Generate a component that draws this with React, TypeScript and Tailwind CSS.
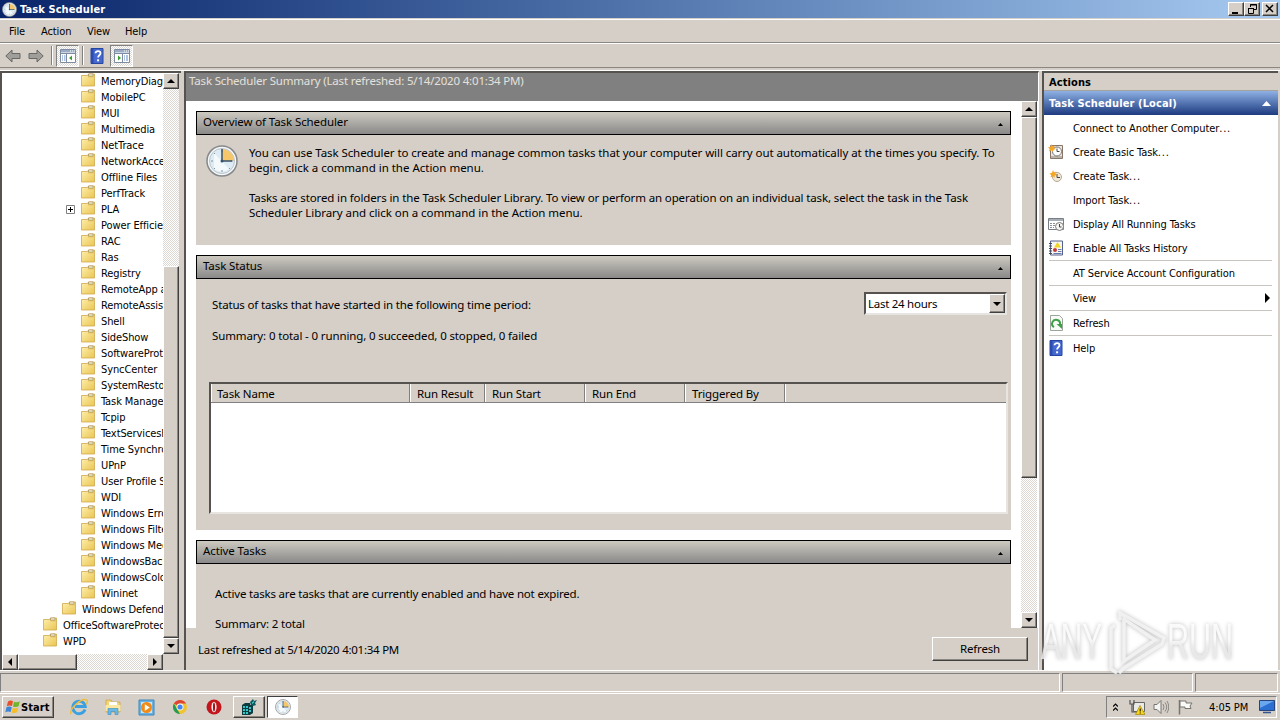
import type { ReactNode } from 'react'

interface TreeNode {
  label: string
  depth: 0 | 1 | 2
  expandable?: boolean
}

const tree: TreeNode[] = [
  ...[
    'MemoryDiagnostic', 'MobilePC', 'MUI', 'Multimedia', 'NetTrace', 'NetworkAccessProtection',
    'Offline Files', 'PerfTrack', 'PLA', 'Power Efficiency Diagnostics', 'RAC', 'Ras', 'Registry',
    'RemoteApp and Desktop', 'RemoteAssistance', 'Shell', 'SideShow', 'SoftwareProtectionPlatform',
    'SyncCenter', 'SystemRestore', 'Task Manager', 'Tcpip', 'TextServicesFramework',
    'Time Synchronization', 'UPnP', 'User Profile Service', 'WDI', 'Windows Error Reporting',
    'Windows Filtering Platform', 'Windows Media Sharing', 'WindowsBackup', 'WindowsColorSystem',
    'Wininet',
  ].map((label): TreeNode => ({ label, depth: 2, expandable: label === 'PLA' })),
  { label: 'Windows Defender', depth: 1 },
  { label: 'OfficeSoftwareProtectionPlatform', depth: 0 },
  { label: 'WPD', depth: 0 },
]

const indent = { 0: 'pl-10', 1: 'pl-[59px]', 2: 'pl-[78px]' }

const columns = [
  { label: 'Task Name', width: 'w-[199px] pl-[5px]' },
  { label: 'Run Result', width: 'w-[75px] pl-1.5' },
  { label: 'Run Start', width: 'w-[100px] pl-1.5' },
  { label: 'Run End', width: 'w-[100px] pl-1.5' },
  { label: 'Triggered By', width: 'w-[100px] pl-1.5' },
]

// classic Windows bevels
const raised = 'bg-[#d5cfc8] border border-t-white border-l-white border-r-[#404040] border-b-[#404040] shadow-[inset_-1px_-1px_0_#8b8680]'
const sunken = 'border border-t-[#808080] border-l-[#808080] border-r-white border-b-white'
const track = 'bg-[repeating-conic-gradient(#ffffff_0_25%,#dcd7d0_0_50%)] bg-[length:2px_2px]'

const ui = "font-['DejaVu_Sans_Condensed','DejaVu_Sans',sans-serif] text-[11px] tracking-[-0.1px]"
const uiBold = "font-['DejaVu_Sans_Condensed','DejaVu_Sans',sans-serif] font-bold text-[11px]"
const body = "font-['Noto_Sans','Open_Sans',sans-serif] text-[11.5px]"

function Arrow({ dir }: { dir: 'up' | 'down' | 'left' | 'right' }) {
  const d = {
    up: 'M0 6 4 2 8 6Z',
    down: 'M0 2 4 6 8 2Z',
    left: 'M6 0 2 4 6 8Z',
    right: 'M2 0 6 4 2 8Z',
  }[dir]
  return <svg className="size-2" viewBox="0 0 8 8"><path d={d} /></svg>
}

function ScrollButton({ dir }: { dir: 'up' | 'down' | 'left' | 'right' }) {
  return (
    <button className={`flex size-4 shrink-0 items-center justify-center ${raised}`}>
      <Arrow dir={dir} />
    </button>
  )
}

function Folder() {
  return (
    <svg className="h-[14px] w-4 shrink-0" viewBox="0 0 16 14">
      <defs>
        <linearGradient id="folder" x1="0" y1="0" x2="1" y2="1">
          <stop offset="0" stopColor="#fff1b0" />
          <stop offset="1" stopColor="#e9c452" />
        </linearGradient>
      </defs>
      <path d="M1.500 2.500h6l1-1.500h6v12h-13z" fill="url(#folder)" stroke="#cfa94a" strokeWidth=".8" />
      <path d="M8 3.800h6" stroke="#d9b558" strokeWidth=".8" />
      <path d="M8.500 1h4.500v2h-4.500z" fill="#fffbe8" stroke="#a08d58" strokeWidth=".7" />
    </svg>
  )
}

function Clock({ className = 'size-4' }: { className?: string }) {
  return (
    <svg className={className} viewBox="0 0 32 32">
      <circle cx="16" cy="16" r="15" fill="#f7f8f8" stroke="#85898c" strokeWidth="1.500" />
      <circle cx="16" cy="16" r="12.500" fill="#dcebf4" stroke="#bac3c9" />
      <path d="M16 16V4a12 12 0 0 1 12 12Z" fill="#f5c76a" />
      <path d="M8 8l15 16a12 12 0 0 1-15 0Z" fill="#f4f9fb" />
      <path d="M16 5v2M16 25v2M5 16h2M25 16h2M8 8l1 1M23 23l1 1M8 24l1-1" stroke="#7c93a4" />
      <path d="M16 4v12h10" fill="none" stroke="#36536d" strokeWidth="1.500" />
      <circle cx="16" cy="16" r="1.500" fill="#36536d" />
    </svg>
  )
}

function HelpIcon() {
  return (
    <svg className="size-4" viewBox="0 0 16 16">
      <path d="M2 .5h12v15H2z" fill="#4468cf" stroke="#2746a0" />
      <path d="M2 1h2.500v14H2z" fill="#2b4cae" />
      <path d="M6.500 5.200C6.500 2.500 11.500 2.500 11.500 5.300c0 2-2.400 2-2.400 4.200" fill="none" stroke="#fff" strokeWidth="1.800" />
      <path d="M8.100 11.300h2v2h-2z" fill="#fff" />
    </svg>
  )
}

function PaneIcon({ flip }: { flip?: boolean }) {
  return (
    <svg className="h-[14px] w-4" viewBox="0 0 16 14">
      <path d="M.5.5h15v13H.5z" fill="#fff" stroke="#7d8ba3" />
      <path d="M1 1h14v2.500H1z" fill="#9cabc4" />
      <path d="M10 2h1M12 2h1M14 2h1" stroke="#fff" />
      <path d="M1 4.500h14" stroke="#7d8ba3" />
      {flip ? (
        <>
          <path d="M8.500 5v8" stroke="#7d8ba3" />
          <path d="M10 7h1M12 7h2M10 9h1M12 9h2M10 11h1M12 11h2" stroke="#5f86c4" />
          <path d="M4 6.500v5L7 9Z" fill="#3c9e35" />
        </>
      ) : (
        <>
          <path d="M6.500 5v8" stroke="#7d8ba3" />
          <path d="M2 7h1M4 7h1.500M2 9h1M4 9h1.500M2 11h1M4 11h1.500" stroke="#5f86c4" />
          <path d="M12 6.500v5L9 9Z" fill="#3c9e35" />
        </>
      )}
    </svg>
  )
}

function NavArrow({ back }: { back?: boolean }) {
  return (
    <svg className="h-[14px] w-4" viewBox="0 0 16 14">
      <path
        d="M.8 7 7 1v3.500h8v5H7V13Z"
        transform={back ? undefined : 'translate(16 0) scale(-1 1)'}
        fill="#a09e9b"
        stroke="#686765"
      />
    </svg>
  )
}

function Spark() {
  return <path d="M3.500 0 4.500 2.300 7 1.500 5.800 3.800 8 5.200 5.300 5.600 5 8 3.500 6.200 1 7.500 1.700 5 0 3.500 2.500 2.800Z" fill="#f5a623" />
}

function BasicTaskIcon() {
  return (
    <svg className="size-4" viewBox="0 0 16 16">
      <path d="M2.500 1.500h12v13h-12z" fill="#e9e6df" stroke="#8a7466" />
      <path d="M3 12h11v2H3z" fill="#b9b3aa" />
      <circle cx="9" cy="7.500" r="4.500" fill="#fff" stroke="#777" />
      <path d="M9 4.500v3h2.500" fill="none" stroke="#444" />
      <Spark />
    </svg>
  )
}

function CreateTaskIcon() {
  return (
    <svg className="size-4" viewBox="0 0 16 16">
      <g transform="translate(1.500 2)">
        <circle cx="7.500" cy="7" r="4.500" fill="#efe8da" stroke="#b9a98c" />
        <path d="M7.500 4v3.500H10.500" fill="none" stroke="#454545" />
        <Spark />
      </g>
    </svg>
  )
}

function RunningIcon() {
  return (
    <svg className="size-4" viewBox="0 0 16 16">
      <path d="M.5 2.500h15v11H.5z" fill="#fff" stroke="#777e86" />
      <path d="M1 3h14v2H1z" fill="#a7adb4" />
      <path d="M2 7.500h6M2 9.500h5M2 11.500h4" stroke="#8a8f94" strokeDasharray="2 1" />
      <circle cx="11.500" cy="10.500" r="4" fill="#f4f4f2" stroke="#7b7b7b" />
      <path d="M11.500 8v3h2" fill="none" stroke="#444" />
    </svg>
  )
}

function HistoryIcon() {
  return (
    <svg className="size-4" viewBox="0 0 16 16">
      <path d="M2.500 1h12v14h-12z" fill="#f8f7ef" stroke="#55618a" />
      <path d="M1 3.500h3M1 6h3M1 8.500h3M1 11h3M1 13.500h3" stroke="#4a4a55" />
      <path d="M9.500 2 13 7.500H6Z" fill="#f2d422" />
      <circle cx="7" cy="10" r="2" fill="#c33a3a" />
      <path d="M10 9.500h3.500M10 11.500h3.500M5.500 13.500h8" stroke="#6678ad" />
    </svg>
  )
}

function RefreshIcon() {
  return (
    <svg className="size-4" viewBox="0 0 16 16">
      <path d="M2.500.5h9l3 3v12h-12z" fill="#f7faf6" stroke="#9aa69a" />
      <path d="M6 12.200A4 4 0 1 1 12 9.500" fill="none" stroke="#3ea046" strokeWidth="2" />
      <path d="M8.500 9h5.500v5Z" fill="#3ea046" />
    </svg>
  )
}

function Section({ title, className, children }: { title: string; className: string; children: ReactNode }) {
  return (
    <section className={`flex w-[815px] shrink-0 flex-col bg-[#d5cfc8] ${className}`}>
      <h2 className="flex h-6 shrink-0 items-center justify-between border border-black bg-linear-to-b from-[#cccac0] to-[#8b8989] pr-[7px] pb-0.5 pl-1.5">
        <span className="tracking-[-0.1px]">{title}</span>
        <svg className="mt-1 h-[3px] w-[5px]" viewBox="0 0 5 3"><path d="M0 3 2.500 0 5 3Z" /></svg>
      </h2>
      {children}
    </section>
  )
}

function Action({ icon, label, submenu }: { icon?: ReactNode; label: string; submenu?: boolean }) {
  // a trailing ellipsis is set wider than the text before it
  const dots = label.endsWith('...')
  return (
    <button className="flex h-6 w-full shrink-0 items-center pl-1 text-left">
      <span className="w-[25px] shrink-0">{icon}</span>
      <span className="flex-1 pt-0.5 whitespace-nowrap">
        {dots ? label.slice(0, -3) : label}
        {dots && <span className="tracking-[0.8px]">...</span>}
      </span>
      {submenu && <svg className="mr-2 h-[10px] w-[5px]" viewBox="0 0 5 10"><path d="M0 0 5 5 0 10Z" /></svg>}
    </button>
  )
}

function TitleBar() {
  return (
    <header className={`flex h-[18px] shrink-0 items-center bg-linear-to-r from-[#0a246a] to-[#a6caf0] pr-0.5 pl-0.5 text-white ${uiBold}`}>
      <Clock className="size-[15px]" />
      <span className="ml-[3px] flex-1 pt-0.5 tracking-[0.1px]">Task Scheduler</span>
      <div className="flex">
        <button className={`h-[14px] w-4 ${raised}`}>
          <svg viewBox="0 0 14 12"><path d="M3 9h6v2H3z" /></svg>
        </button>
        <button className={`h-[14px] w-4 ${raised}`}>
          <svg viewBox="0 0 14 12">
            <path d="M5.500 4V1.500h6v5H9M5 2h7" fill="none" stroke="#000" />
            <path d="M3.500 5.500h5v5h-5zM3 5.500h6" fill="none" stroke="#000" />
          </svg>
        </button>
        <button className={`ml-0.5 h-[14px] w-4 ${raised}`}>
          <svg viewBox="0 0 14 12"><path d="M3 2l7 7M10 2L3 9" stroke="#000" strokeWidth="1.500" /></svg>
        </button>
      </div>
    </header>
  )
}

function Toolbar() {
  return (
    <div className="flex h-6 shrink-0 items-center border-t border-white pl-[5px]">
      <NavArrow back />
      <span className="ml-[7px] flex"><NavArrow /></span>
      <i className="ml-[7px] h-[19px] w-0.5 border-l border-[#808080] bg-white" />
      <span className={`ml-[3px] flex h-[22px] w-[23px] items-center justify-center ${track} ${sunken}`}><PaneIcon /></span>
      <i className="ml-[3px] h-[19px] w-0.5 border-l border-[#808080] bg-white" />
      <span className="ml-[5px]"><HelpIcon /></span>
      <span className={`ml-[5px] flex h-[22px] w-[23px] items-center justify-center ${track} ${sunken}`}><PaneIcon flip /></span>
    </div>
  )
}

function TreePane() {
  return (
    <aside className="flex w-[181px] flex-col border-t-2 border-l-2 border-[#55524f] bg-white">
      <div className="flex h-[581px]">
        <ul className="w-[161px] overflow-hidden">
          {tree.map(node => (
            <li key={node.label} className={`relative flex h-4 items-center whitespace-nowrap ${indent[node.depth]}`}>
              {node.expandable && (
                <svg className="absolute top-1 left-16 size-[9px]" viewBox="0 0 9 9">
                  <path d="M.5.5h8v8h-8z" fill="#fff" stroke="#808080" />
                  <path d="M2 4.500h5M4.500 2v5" stroke="#000" />
                </svg>
              )}
              <span className="-mt-0.5 flex"><Folder /></span>
              <span className="ml-[5px] pt-0.5">{node.label}</span>
            </li>
          ))}
        </ul>
        <div className={`flex w-4 flex-col ${track}`}>
          <ScrollButton dir="up" />
          <div className="flex-1" />
          <div className={`h-[372px] ${raised}`} />
          <ScrollButton dir="down" />
        </div>
        <div className="w-0.5 bg-[#d5cfc8]" />
      </div>
      <div className="flex flex-1 bg-[#d5cfc8]">
        <div className={`flex h-4 w-[161px] ${track}`}>
          <ScrollButton dir="left" />
          <div className={`w-[59px] ${raised}`} />
          <div className="flex-1" />
          <ScrollButton dir="right" />
        </div>
      </div>
    </aside>
  )
}

function SummaryPane() {
  return (
    <main className={`flex w-[855px] flex-col border-t-2 border-r border-l-2 border-[#55524f] border-r-white bg-[#d5cfc8] tracking-normal ${body}`}>
      <h1 className="h-7 shrink-0 bg-[#808080] pl-[3px] leading-4 text-[#e4e1dc]">
        <span className="tracking-[-0.18px]">Task Scheduler Summary (Last refreshed: 5/14/2020 4:01:34 PM)</span>
      </h1>
      <div className="flex h-[527px] shrink-0 bg-white">
        <div className="flex flex-1 flex-col gap-2.5 overflow-hidden pt-2.5 pl-2.5">
          <Section title="Overview of Task Scheduler" className="h-[134px]">
            <div className="flex pt-2.5 pl-2.5">
              <Clock className="size-8 shrink-0" />
              <div className="ml-[11px] leading-[15px] whitespace-nowrap">
                <p className="tracking-[-0.076px]">You can use Task Scheduler to create and manage common tasks that your computer will carry out automatically at the times you specify. To</p>
                <p className="tracking-[-0.01px]">begin, click a command in the Action menu.</p>
                <p className="mt-[15px] tracking-[-0.125px]">Tasks are stored in folders in the Task Scheduler Library. To view or perform an operation on an individual task, select the task in the Task</p>
                <p className="tracking-[-0.05px]">Scheduler Library and click on a command in the Action menu.</p>
              </div>
            </div>
          </Section>
          <Section title="Task Status" className="h-[275px]">
            <div className="flex items-center justify-between pt-[13px] pr-1 pl-4">
              <span className="pt-0.5 tracking-[-0.16px]">Status of tasks that have started in the following time period:</span>
              <div className="flex h-[23px] w-[143px] items-center justify-between border-2 border-t-[#55524f] border-r-[#e8e5e0] border-b-[#e8e5e0] border-l-[#55524f] bg-white pl-0.5">
                <span className="tracking-[-0.27px]">Last 24 hours</span>
                <button className={`flex h-[19px] w-4 items-center justify-center ${raised}`}><Arrow dir="down" /></button>
              </div>
            </div>
            <p className="mt-[13px] pl-4 leading-4 tracking-[-0.13px]">Summary: 0 total - 0 running, 0 succeeded, 0 stopped, 0 failed</p>
            <div className="mt-[38px] ml-[13px] h-[132px] w-[799px] border-2 border-t-[#55524f] border-r-[#e8e5e0] border-b-[#e8e5e0] border-l-[#55524f] bg-white">
              <div className="flex h-[19px] border-b border-[#808080] bg-[#d5cfc8]">
                {columns.map(col => (
                  <span key={col.label} className={`border-r border-l border-r-[#808080] border-l-white leading-[19px] tracking-[-0.15px] whitespace-nowrap ${col.width}`}>
                    {col.label}
                  </span>
                ))}
                <span className="w-px bg-white" />
              </div>
            </div>
          </Section>
          <Section title="Active Tasks" className="h-[134px]">
            <p className="mt-[22px] pl-[19px] leading-4 tracking-[-0.19px]">Active tasks are tasks that are currently enabled and have not expired.</p>
            <p className="mt-3.5 h-[12px] overflow-hidden pl-[19px] leading-4 tracking-[-0.15px]">Summary: 2 total</p>
          </Section>
        </div>
        <div className={`mr-px flex w-4 flex-col ${track}`}>
          <ScrollButton dir="up" />
          <div className={`h-[361px] ${raised}`} />
          <div className="flex-1" />
          <ScrollButton dir="down" />
        </div>
      </div>
      <footer className="flex flex-1 items-center justify-between pr-2.5 pl-3">
        <span className="pt-px tracking-[-0.26px]">Last refreshed at 5/14/2020 4:01:34 PM</span>
        <button className={`h-6 w-24 tracking-[-0.2px] ${raised}`}>Refresh</button>
      </footer>
    </main>
  )
}

// translucent logo lying over the lower right of the desktop
function Watermark() {
  return (
    <svg className="pointer-events-none absolute top-[602px] left-[1036px] h-[76px] w-[204px] drop-shadow-[0_0_2px_#b4b4b4]" viewBox="0 0 204 76">
      <defs>
        <linearGradient id="mark" x1="0" y1="0" x2="0" y2="1">
          <stop offset=".45" stopColor="#ffffff" />
          <stop offset=".6" stopColor="#ebebeb" />
        </linearGradient>
      </defs>
      <g className="font-['Liberation_Sans_Narrow','Liberation_Sans',sans-serif] text-[50px]" fill="url(#mark)" fillOpacity=".85">
        <text x="5" y="57" textLength="61" lengthAdjust="spacingAndGlyphs">ANY</text>
        <text x="131" y="57" textLength="66" lengthAdjust="spacingAndGlyphs">RUN</text>
      </g>
      <g fill="none" stroke="#f4f4f4" strokeWidth="3.500" strokeOpacity=".9">
        <path d="M88 17v42l31-21Z" />
        <path d="M79 23l-4 3v41l6 4M84 18v-7l44 25-2 6-38 24-5 5" />
      </g>
    </svg>
  )
}

function ActionsPane() {
  return (
    <aside className="flex w-[236px] flex-col border-t-2 border-l-2 border-[#55524f] bg-white">
      <h2 className={`h-[18px] border-b border-[#a5a19c] bg-[#d5cfc8] pl-[5px] leading-[19px] ${uiBold}`}>
        <span className="tracking-[0.1px]">Actions</span>
      </h2>
      <div className={`flex h-6 items-center justify-between bg-linear-to-b from-[#8fb1e4] to-[#1f3b80] pr-[7px] pl-[5px] text-white ${uiBold}`}>
        <span className="pt-[3px] tracking-[0.12px]">Task Scheduler (Local)</span>
        <svg className="h-[5px] w-[9px]" viewBox="0 0 9 5"><path d="M0 5 4.500 0 9 5Z" fill="#fff" /></svg>
      </div>
      <nav className="flex flex-col pt-px">
        <Action label="Connect to Another Computer..." />
        <Action icon={<BasicTaskIcon />} label="Create Basic Task..." />
        <Action icon={<CreateTaskIcon />} label="Create Task..." />
        <Action label="Import Task..." />
        <Action icon={<RunningIcon />} label="Display All Running Tasks" />
        <Action icon={<HistoryIcon />} label="Enable All Tasks History" />
        <hr className="mr-[6px] ml-[5px] border-[#c8c5c1]" />
        <Action label="AT Service Account Configuration" />
        <hr className="mr-[6px] ml-[5px] border-[#c8c5c1]" />
        <Action label="View" submenu />
        <hr className="mr-[6px] ml-[5px] border-[#c8c5c1]" />
        <Action icon={<RefreshIcon />} label="Refresh" />
        <hr className="mr-[6px] ml-[5px] border-[#c8c5c1]" />
        <Action icon={<HelpIcon />} label="Help" />
      </nav>
    </aside>
  )
}

function Taskbar() {
  return (
    <footer className="flex h-[27px] shrink-0 items-center border-t border-white pr-[3px] pl-0.5">
      <button className={`flex h-[22px] w-[52px] items-center pl-0.5 ${raised} ${uiBold}`}>
        <svg className="size-4 shrink-0" viewBox="0 0 16 16">
          <path d="M3 2.500Q5.500.8 8 2.200L7 7Q4.500 5.800 1.800 7.300Z" fill="#e8502a" />
          <path d="M9 2.700Q12 4 14.800 2.300L13.500 7.300Q11 8.800 8 7.500Z" fill="#6fb52c" />
          <path d="M1.500 8.300Q4.300 7 6.800 8.200L5.600 13Q3 11.800.3 13.300Z" fill="#3c85d8" />
          <path d="M7.800 8.700Q10.500 10 13.300 8.400L12 13.300Q9.400 14.800 6.600 13.500Z" fill="#f6bd28" />
        </svg>
        <span className="pt-0.5 tracking-[0.1px]">Start</span>
      </button>
      <svg className="ml-4 size-[18px]" viewBox="0 0 18 18">
        <path d="M15 11.500A6.300 6.300 0 1 1 15.300 8.500H5" fill="none" stroke="#3aa0e0" strokeWidth="2.800" />
        <path d="M1 16C-1 11 12-1 17 2.300c1 .9 0 3-.8 4" fill="none" stroke="#efbd3a" strokeWidth="1.500" />
      </svg>
      <svg className="ml-4 size-[18px]" viewBox="0 0 18 18">
        <path d="M2 2h5l1 2h8v10H2z" fill="#f3d577" stroke="#cba64a" strokeWidth=".8" />
        <path d="M5 4h8v4H5z" fill="#fff" />
        <path d="M1.500 7h15v6h-15z" fill="#f9e7a2" />
        <path d="M4 16.500v-6h10v6h-3v-3H7v3z" fill="#68b7e4" stroke="#4794c4" strokeWidth=".7" />
      </svg>
      <svg className="ml-4 size-[17px]" viewBox="0 0 17 17">
        <path d="M1 1h15v15H1z" fill="#6ab2e4" stroke="#3c86bd" />
        <path d="M3 3h11v11H3z" fill="#c8e5f6" />
        <circle cx="8.500" cy="8.500" r="5.500" fill="#f28a18" />
        <path d="M6.800 5.300v6.400l5-3.200z" fill="#fff" />
      </svg>
      <svg className="ml-[17px] size-4" viewBox="0 0 16 16">
        <circle cx="8" cy="8" r="7" fill="#f1c32e" />
        <path d="M8 8 1.900 4.500A7 7 0 0 1 14.100 4.500H8Z" fill="#db4437" />
        <path d="M1.900 4.500 5 10l3 5A7 7 0 0 1 1.900 4.500Z" fill="#229b56" />
        <circle cx="8" cy="8" r="3.400" fill="#fff" />
        <circle cx="8" cy="8" r="2.600" fill="#4285f4" />
      </svg>
      <svg className="ml-[18px] size-4" viewBox="0 0 16 16">
        <circle cx="8" cy="8" r="7.500" fill="#c3151b" />
        <ellipse cx="8" cy="8" rx="2.600" ry="5.300" fill="#f4eaea" />
        <ellipse cx="8" cy="8" rx="1" ry="4.500" fill="#a01015" />
      </svg>
      <button className={`ml-[11px] flex h-[22px] w-8 items-center justify-center ${raised}`}>
        <svg className="size-4" viewBox="0 0 16 16">
          <path d="M1 6 4 4h5v2l3-1v9l-3 2H1z" fill="#0d3c40" />
          <path d="M2 7h2v2H2zM5 7h2v2H5zM8 8h2v2H8zM2 10h2v2H2zM5 10h2v2H5zM8 11h2v2H8zM2 13h2v2H2zM5 13h2v2H5z" fill="#35c6c9" />
          <path d="M9 3l3-3 1 2 3-1-2 3 1 2-3 1-2-1z" fill="#0b5a60" />
          <path d="M11 4h1V3h1" fill="none" stroke="#57e0e0" />
        </svg>
      </button>
      <button className="ml-[2px] flex h-[22px] w-[31px] items-center justify-center border border-t-[#404040] border-r-white border-b-white border-l-[#404040] bg-white pl-px">
        <Clock />
      </button>
      <div className="flex-1" />
      <div className={`flex h-[22px] w-[171px] items-center pl-1.5 ${sunken}`}>
        <svg className="h-[9px] w-[5px]" viewBox="0 0 5 9"><path d="M0 3.500 2.500 1 5 3.500M0 7.500 2.500 5 5 7.500" fill="none" stroke="#000" strokeWidth="1.200" /></svg>
        <svg className="ml-[11px] size-4" viewBox="0 0 16 16">
          <path d="M4.500 3.500h11v9h-11z" fill="#e9e9e6" stroke="#666" />
          <path d="M1 1v4h4V1M3 5v8h5" fill="none" stroke="#555" strokeWidth="1.200" />
          <path d="M11 6.500 16 15.500H6.500Z" fill="#f7d51d" stroke="#9f8507" strokeWidth=".7" />
          <path d="M11.200 9.500v3M11.200 13.500v1" stroke="#000" />
        </svg>
        <svg className="ml-2 size-4" viewBox="0 0 16 16">
          <path d="M1 5.500h3l4-4v13l-4-4H1z" fill="#f4f4f2" stroke="#77756f" />
          <path d="M10 5q2 3 0 6M12 3.500q3.500 4.500 0 9M14 2q3.500 6 0 12" fill="none" stroke="#8b8983" />
        </svg>
        <svg className="ml-2 size-4" viewBox="0 0 16 16">
          <path d="M2.500 1v14.500" stroke="#77756f" strokeWidth="1.500" />
          <path d="M3 2h6v2h6l-2 3 1 2.500H8V8H3z" fill="#fafaf8" stroke="#77756f" />
        </svg>
        <span className="ml-4 pt-0.5 whitespace-nowrap">4:05 PM</span>
        <svg className="ml-[11px] h-[14px] w-4 shrink-0" viewBox="0 0 16 14">
          <path d="M.5.5h15v10H.5z" fill="#2a6fd1" stroke="#24457d" />
          <path d="M1 1h14L1 8z" fill="#69a7ee" />
          <path d="M4 12.500h8" stroke="#33558f" strokeWidth="1.500" />
        </svg>
      </div>
    </footer>
  )
}

export default function App() {
  return (
    <div className={`relative flex h-[720px] w-[1280px] flex-col overflow-hidden bg-[#d5cfc8] text-black ${ui}`}>
      <TitleBar />
      <nav className="mt-px flex h-6 shrink-0 items-center border-t border-b border-t-white border-b-[#8b8680] pt-[3px] pl-[9px]">
        <span className="w-[32px]">File</span>
        <span className="w-[46px]">Action</span>
        <span className="w-[38px]">View</span>
        <span>Help</span>
      </nav>
      <Toolbar />
      <div className="h-1 shrink-0 border-t border-b border-t-[#8b8680] border-b-white" />
      <div className="flex h-[600px] shrink-0 gap-[3px] border-b border-white">
        <TreePane />
        <SummaryPane />
        <ActionsPane />
      </div>
      <div className="flex h-[22px] shrink-0 gap-0.5 pt-0.5 pr-0.5 pb-px">
        <span className={`w-[1060px] ${sunken}`} />
        <span className={`w-[131px] ${sunken}`} />
        <span className={`flex-1 ${sunken}`} />
      </div>
      <Taskbar />
      <Watermark />
    </div>
  )
}
